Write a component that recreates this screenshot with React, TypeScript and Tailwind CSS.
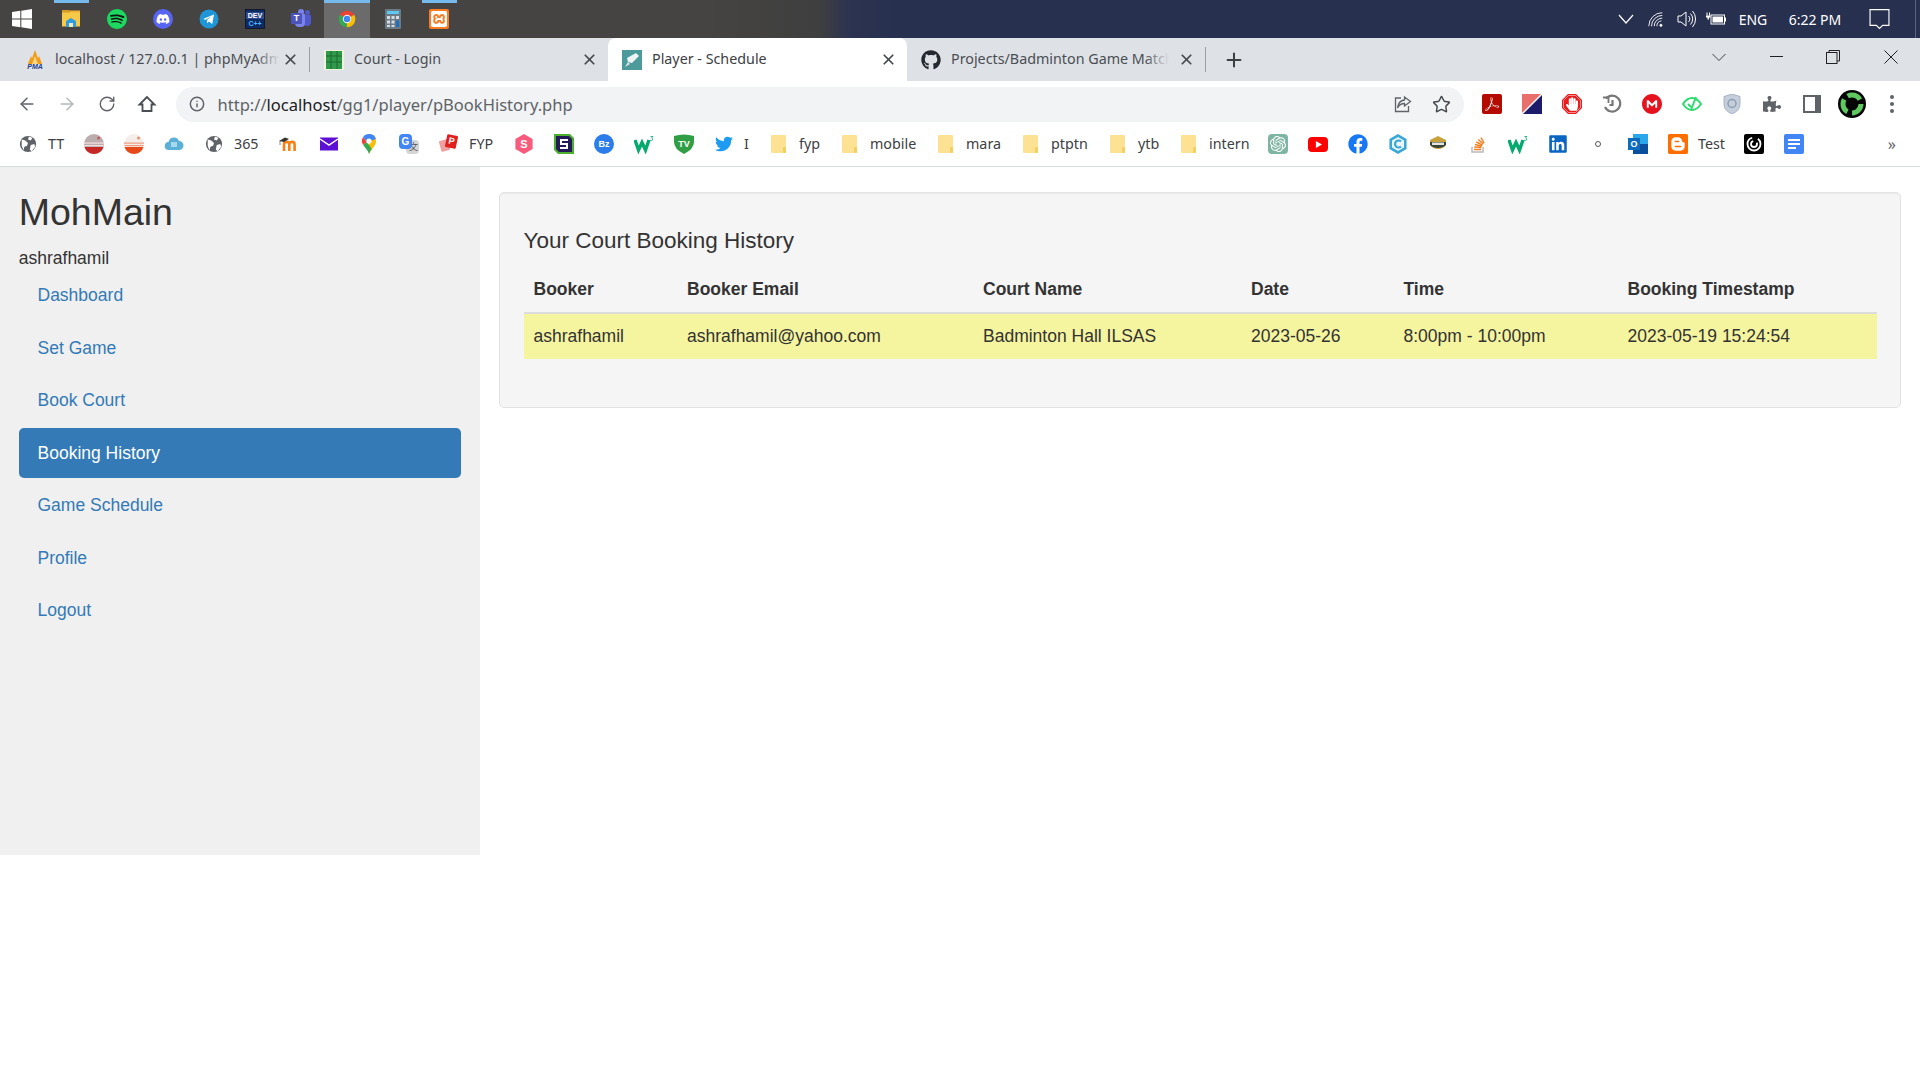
import React from 'react';
import { FaDiscord, FaFacebook, FaGithub, FaHandPaper, FaLinkedin, FaPuzzlePiece, FaTwitter } from 'react-icons/fa';
import { SiAdobeacrobatreader, SiBlogger, SiMega, SiOpenai, SiSpotify, SiXampp } from 'react-icons/si';
import { ArrowLeft, ArrowRight, Info, Plus, RotateCw, Star, X } from 'lucide-react';

const Chrome = () => (
  <svg viewBox="0 0 48 48" className="w-5 h-5">
    <path d="M24 24L41.3 14A20 20 0 0 0 6.7 14Z" fill="#ea4335" />
    <path d="M24 24L6.7 14A20 20 0 0 0 24 44Z" fill="#34a853" />
    <path d="M24 24L24 44A20 20 0 0 0 41.3 14Z" fill="#fbbc04" />
    <circle cx="24" cy="24" r="10" fill="#fff" />
    <circle cx="24" cy="24" r="8" fill="#4285f4" />
  </svg>
);

const Globe = () => (
  <svg viewBox="0 0 20 20" className="w-[18px] h-[18px]">
    <circle cx="10" cy="10" r="9" fill="#5f6368" />
    <path d="M3 5l4 1 3 3-1 3-3 1-1 4-2-5zM11 2l4 1-2 3-3-1zM13 11l4-1 1 3-4 5-2-2z" fill="#fff" />
  </svg>
);

const Folder = () => (
  <svg viewBox="0 0 20 20" className="w-5 h-5">
    <path d="M3 1h13a1 1 0 0 1 1 1v16a1 1 0 0 1-1 1H3a1 1 0 0 1-1-1V2a1 1 0 0 1 1-1z" fill="#fde293" />
    <rect x="14" y="13" width="3" height="6" rx="1" fill="#f6cf5c" />
  </svg>
);

const Oval = ({ top, stripe, dark }: { top: string; stripe: string; dark: string }) => (
  <svg viewBox="0 0 20 20" className="w-5 h-5">
    <circle cx="10" cy="10" r="10" fill={top} />
    <path d="M0.500 13h19a10 10 0 0 1-19 0z" fill={dark} />
    <rect x="0" y="8.500" width="20" height="1.200" fill={stripe} />
    <rect x="0.500" y="11" width="19" height="1.200" fill={stripe} />
    <circle cx="14.500" cy="4" r="1.500" fill={dark} opacity="0.6" />
  </svg>
);

const W3 = () => (
  <svg viewBox="0 0 20 20" className="w-5 h-5" fill="none">
    <path d="M1 6l3.500 10L8 8.500 11.500 16 15 6" stroke="#04aa6d" strokeWidth="3.400" />
    <path d="M16.500 2.500h2.500l-1.500 1.500q2 .5 1 2-1 1-2.500.2" stroke="#04aa6d" strokeWidth="0.800" />
  </svg>
);

const Hex = ({ color, label }: { color: string; label: string }) => (
  <span className="relative w-5 h-5 flex items-center justify-center">
    <svg viewBox="0 0 20 20" className="absolute inset-0 w-5 h-5">
      <path d="M10 0l8.600 5v10L10 20l-8.600-5V5z" fill={color} />
    </svg>
    <span className="relative text-white text-[11px] font-bold font-['Liberation_Sans',sans-serif]">{label}</span>
  </span>
);

type Mark = { icon: React.ReactNode; label?: string; labelWidth?: string };

const bookmarks: Mark[] = [
  { icon: <Globe />, label: 'TT', labelWidth: 'w-[16px]' },
  { icon: <Oval top="#bcaeae" stripe="#f5dede" dark="#c62828" /> },
  { icon: <Oval top="#f4eeea" stripe="#f09a80" dark="#e64a19" /> },
  {
    icon: (
      <svg viewBox="0 0 20 20" className="w-5 h-5">
        <path d="M5 16a4 4 0 0 1-.5-8A5.500 5.500 0 0 1 15 7a4.500 4.500 0 0 1 0 9z" fill="#5bb0d8" />
        <rect x="7" y="8" width="6" height="5" fill="#a8d8ee" />
      </svg>
    ),
  },
  { icon: <Globe />, label: '365', labelWidth: 'w-[25px]' },
  {
    icon: (
      <svg viewBox="0 0 20 20" className="w-5 h-5" fill="none">
        <path d="M5 17v-6.500a2.600 2.600 0 0 1 5.300 0V17M10.300 10.500a2.600 2.600 0 0 1 5.300 0V17" stroke="#f98012" strokeWidth="2.600" />
        <path d="M0 7l6-3.500L10 5 5 8z" fill="#333" />
        <path d="M1 7v4" stroke="#555" strokeWidth="0.700" />
      </svg>
    ),
  },
  {
    icon: (
      <svg viewBox="0 0 20 20" className="w-5 h-5">
        <rect x="1" y="3.500" width="18" height="13" fill="#5e0fd6" />
        <path d="M1 5l9 6 9-6" fill="none" stroke="#fff" strokeWidth="1.500" />
      </svg>
    ),
  },
  {
    icon: (
      <svg viewBox="0 0 20 20" className="w-5 h-5">
        <path d="M10 0a7 7 0 0 1 7 7c0 5-5 8-7 13z" fill="#fbbc04" />
        <path d="M10 0a7 7 0 0 0-6 3.300L8 8l9-3a7 7 0 0 0-7-5z" fill="#4285f4" />
        <path d="M4 3.300A7 7 0 0 0 4.200 11L8 8z" fill="#ea4335" />
        <path d="M4.200 11C6 14 9 16 10 20c.6-2 1.600-3.600 2.700-5L8 8z" fill="#34a853" />
        <circle cx="10" cy="7" r="2.600" fill="#fff" />
      </svg>
    ),
  },
  {
    icon: (
      <span className="relative w-5 h-5">
        <span className="absolute right-0 bottom-0 w-[13px] h-[14px] bg-[#d5d5d5] rounded-sm text-[9px] text-[#555] text-right pr-[1px] font-['Noto_Sans_CJK_SC',sans-serif] leading-[14px]">
          文
        </span>
        <span className="absolute left-0 top-0 w-[13px] h-[15px] bg-[#4285f4] rounded-sm text-[10px] font-bold text-white text-center leading-[15px] font-['Liberation_Sans',sans-serif]">
          G
        </span>
      </span>
    ),
  },
  {
    icon: (
      <span className="relative w-5 h-5">
        <span className="absolute left-[1px] top-[6px] w-[9px] h-[11px] bg-[#f0a0a0] rotate-[-15deg] rounded-[1px]" />
        <span className="absolute left-[7px] top-[1px] w-[11px] h-[13px] bg-[#e0201c] rotate-[12deg] rounded-[1px] text-white text-[9px] font-bold text-center leading-[13px] font-['Liberation_Sans',sans-serif]">
          P
        </span>
      </span>
    ),
    label: 'FYP',
    labelWidth: 'w-[25px]',
  },
  { icon: <Hex color="#f85b7c" label="S" /> },
  {
    icon: (
      <svg viewBox="0 0 20 20" className="w-5 h-5">
        <path d="M0 0h16l4 4v16H4l-4-4z" fill="#4caf2e" />
        <path d="M2 2h13l3 3v13H5l-3-3z" fill="#241a58" />
        <path d="M6 5h8v2H8v2h6v6H6v-2h6v-2H6z" fill="#fff" />
      </svg>
    ),
  },
  {
    icon: (
      <span className="w-5 h-5 rounded-full bg-[#2b7de9] text-white text-[9px] font-bold flex items-center justify-center font-['Liberation_Sans',sans-serif]">
        Bz
      </span>
    ),
  },
  { icon: <W3 /> },
  {
    icon: (
      <span className="relative w-5 h-5 flex items-center justify-center">
        <svg viewBox="0 0 20 20" className="absolute inset-0 w-5 h-5">
          <path d="M0 2q10-3 20 0v6q0 7-10 12Q0 15 0 8z" fill="#2f9e44" />
        </svg>
        <span className="relative text-white text-[9px] font-bold font-['Liberation_Sans',sans-serif]">TV</span>
      </span>
    ),
  },
  { icon: <FaTwitter className="w-[18px] h-[18px] text-[#1d9bf0]" />, label: 'I', labelWidth: 'w-[5px]' },
  { icon: <Folder />, label: 'fyp', labelWidth: 'w-[21px]' },
  { icon: <Folder />, label: 'mobile', labelWidth: 'w-[46px]' },
  { icon: <Folder />, label: 'mara', labelWidth: 'w-[35px]' },
  { icon: <Folder />, label: 'ptptn', labelWidth: 'w-[37px]' },
  { icon: <Folder />, label: 'ytb', labelWidth: 'w-[21px]' },
  { icon: <Folder />, label: 'intern', labelWidth: 'w-[39px]' },
  {
    icon: (
      <span className="w-5 h-5 rounded-[4px] bg-[#7fb5a3] flex items-center justify-center">
        <SiOpenai className="w-[16px] h-[16px] text-white" />
      </span>
    ),
  },
  {
    icon: (
      <span className="w-5 h-[15px] rounded-[4px] bg-[#f00] flex items-center justify-center">
        <svg viewBox="0 0 8 8" className="w-[7px] h-[7px]">
          <path d="M1 0l7 4-7 4z" fill="#fff" />
        </svg>
      </span>
    ),
  },
  { icon: <FaFacebook className="w-5 h-5 text-[#1877f2]" /> },
  {
    icon: (
      <svg viewBox="0 0 20 20" className="w-5 h-5">
        <path d="M10 0l8.600 5v10L10 20l-8.600-5V5z" fill="#38a9d6" />
        <path d="M10 3l6 3.500v7L10 17l-6-3.500v-7z" fill="#eaf6fb" />
        <path d="M13 7.500a3.500 3.500 0 1 0 0 5" fill="none" stroke="#38a9d6" strokeWidth="2.200" />
      </svg>
    ),
  },
  {
    icon: (
      <svg viewBox="0 0 20 20" className="w-5 h-5">
        <path d="M6 4l4-2 4 2 4 2v5q-3 4-8 4t-8-4V6z" fill="#c7a23d" />
        <path d="M2 8h16v3q-3 3-8 3t-8-3z" fill="#39443c" />
        <rect x="4" y="8.500" width="12" height="2.500" fill="#e5e5e0" />
      </svg>
    ),
  },
  {
    icon: (
      <svg viewBox="0 0 20 20" className="w-5 h-5" fill="none">
        <path d="M4 13v5h11v-5" stroke="#bcbbbb" strokeWidth="1.500" />
        <path d="M6 15.500h7M6.300 13l7 .6M7 10.500l6.800 1.800M8.300 8l6.200 3.200M10.300 5.500l5 4.500M13 3.500l3 5.500" stroke="#f48024" strokeWidth="1.500" />
      </svg>
    ),
  },
  { icon: <W3 /> },
  { icon: <FaLinkedin className="w-5 h-5 text-[#0a66c2]" /> },
  {
    icon: (
      <span className="w-5 h-5 flex items-center justify-center">
        <span className="w-[6px] h-[6px] rounded-full border border-[#555] bg-white" />
      </span>
    ),
  },
  {
    icon: (
      <span className="relative w-5 h-5">
        <span className="absolute right-0 top-0 w-[15px] h-5 bg-[#28a8ea]" />
        <span className="absolute right-0 bottom-0 w-[15px] h-[10px] bg-[#0a4f9e]" />
        <span className="absolute left-0 top-[4px] w-[12px] h-[12px] bg-[#0f6cbd] text-white text-[9px] font-bold text-center leading-[12px] font-['Liberation_Sans',sans-serif]">
          O
        </span>
      </span>
    ),
  },
  { icon: <SiBlogger className="w-5 h-5 text-[#ff6d00]" />, label: 'Test', labelWidth: 'w-[26px]' },
  {
    icon: (
      <svg viewBox="0 0 20 20" className="w-5 h-5">
        <rect width="20" height="20" rx="2" fill="#000" />
        <circle cx="10" cy="10" r="6.500" fill="none" stroke="#fff" strokeWidth="1.800" strokeDasharray="28 6" />
        <circle cx="10" cy="10" r="3" fill="none" stroke="#fff" strokeWidth="1.800" strokeDasharray="13 4" />
      </svg>
    ),
  },
  {
    icon: (
      <svg viewBox="0 0 20 20" className="w-5 h-5">
        <rect width="20" height="20" rx="2" fill="#4285f4" />
        <path d="M4 5h12v2H4zM4 9h12v2H4zM4 13h8v2H4z" fill="#fff" />
      </svg>
    ),
  },
];

const taskIcons: { icon: React.ReactNode; bar?: boolean; active?: boolean }[] = [
  {
    bar: true,
    icon: (
      <svg viewBox="0 0 20 20" className="w-5 h-5">
        <path d="M1 1.500h18v3H1z" fill="#f2b134" />
        <path d="M1 1.500h7l2 2h9v14H1z" fill="#f7c948" />
        <path d="M1 1.500h7l1.500 2H1z" fill="#d69a1e" />
        <path d="M5 12l5-3 5 3v6H5z" fill="#2f9be0" />
        <rect x="8" y="14" width="4" height="4" fill="#f7e9b0" />
      </svg>
    ),
  },
  {
    icon: (
      <span className="w-5 h-5 rounded-full bg-[#121212] flex items-center justify-center">
        <SiSpotify className="w-5 h-5 text-[#1ed760]" />
      </span>
    ),
  },
  {
    icon: (
      <span className="w-5 h-5 rounded-full bg-[#5865f2] flex items-center justify-center">
        <FaDiscord className="w-[14px] h-[14px] text-white" />
      </span>
    ),
  },
  {
    icon: (
      <svg viewBox="0 0 20 20" className="w-5 h-5">
        <circle cx="10" cy="10" r="9.500" fill="#1f96d8" />
        <path d="M4 10l11-4.500-1.800 9.500-3.300-2.400-1.700 1.700-.3-3 4.400-4-5.600 3.400z" fill="#fff" />
      </svg>
    ),
  },
  {
    icon: (
      <span className="w-5 h-5 bg-[#0d2a63] border border-[#10182b] flex flex-col items-center justify-center font-['Liberation_Sans',sans-serif] font-bold leading-none">
        <span className="text-[7px] text-white bg-[#2c4a8c] w-full text-center">DEV</span>
        <span className="text-[7px] text-[#4fb3ff] mt-[1px]">C++</span>
      </span>
    ),
  },
  {
    icon: (
      <span className="relative w-5 h-5">
        <span className="absolute right-0 top-[6px] w-[8px] h-[11px] rounded-b-[4px] bg-[#5059c9]" />
        <span className="absolute right-[1px] top-[1px] w-[5px] h-[5px] rounded-full bg-[#5059c9]" />
        <span className="absolute left-[7px] top-0 w-[6px] h-[6px] rounded-full bg-[#7b83eb]" />
        <span className="absolute left-[4px] top-[5px] w-[10px] h-[13px] rounded-b-[4px] bg-[#7b83eb]" />
        <span className="absolute left-0 top-[4px] w-[11px] h-[11px] rounded-[1px] bg-[#4b53bc] text-white text-[9px] font-bold text-center leading-[11px] font-['Liberation_Sans',sans-serif]">
          T
        </span>
      </span>
    ),
  },
  { bar: true, active: true, icon: <Chrome /> },
  {
    icon: (
      <svg viewBox="0 0 20 20" className="w-5 h-5">
        <rect x="2" y="0" width="16" height="20" rx="1" fill="#6c7a86" />
        <rect x="4" y="2" width="12" height="3" fill="#5ec8f2" />
        <path d="M4 7h3v3H4zM8.500 7h3v3h-3zM4 11.500h3v3H4zM8.500 11.500h3v3h-3zM4 16h3v2H4zM8.500 16h3v2h-3z" fill="#d6dde2" />
        <rect x="13" y="7" width="3" height="3" fill="#d6dde2" />
        <rect x="13" y="11.500" width="3" height="6.500" fill="#1f6fbf" />
      </svg>
    ),
  },
  {
    bar: true,
    icon: (
      <span className="w-5 h-5 rounded-[2px] bg-[#fb7a24] flex items-center justify-center">
        <SiXampp className="w-4 h-4 text-white" />
      </span>
    ),
  },
];

const Tab = ({
  icon,
  title,
  active,
  widthClass,
  padClass,
  textClass,
  fadeTo,
}: {
  icon: React.ReactNode;
  title: string;
  active?: boolean;
  widthClass: string;
  padClass: string;
  textClass: string;
  fadeTo?: string;
}) => (
  <div className={`${widthClass} ${padClass} h-[43px] flex items-center pr-[10px] ${active ? 'bg-white rounded-t-lg text-[#3c4043]' : 'text-[#4a4e53]'}`}>
    <span className="w-5 h-5 flex items-center justify-center shrink-0">{icon}</span>
    <span className={`relative ml-[10px] mb-[2px] ${textClass} overflow-hidden whitespace-nowrap leading-[20px]`}>
      {title}
      {fadeTo && <span className={`absolute right-0 top-0 bottom-0 w-[24px] bg-gradient-to-r from-transparent ${fadeTo}`} />}
    </span>
    <X className="ml-auto w-[17px] h-[17px] text-[#45484c] shrink-0" strokeWidth={2.4} />
  </div>
);

const nav = ['Dashboard', 'Set Game', 'Book Court', 'Booking History', 'Game Schedule', 'Profile', 'Logout'];

const TOOLBAR_BTN = 'w-[40px] h-[35px] flex items-center justify-center shrink-0';

export default function App() {
  return (
    <div className="min-h-[1080px] bg-white overflow-hidden font-['Liberation_Sans',Arial,sans-serif] text-[17.5px] leading-[25px] text-[#333]">
      <div id="browser-chrome" className="font-['Noto_Sans',sans-serif]">
        {/* windows taskbar */}
        <div className="h-[38px] flex items-stretch text-white bg-[linear-gradient(90deg,#454442_0,#454442_700px,#3f3f3f_820px,#2b3350_850px,#27304f_900px,#27304f_100%)]">
          <div className="w-[48px] flex items-center justify-center pr-[5px]">
            <svg viewBox="0 0 20 20" className="w-5 h-5">
              <path d="M0 3l8.300-1.200v7.700H0zM9.300 1.700L20 0v9.500H9.300zM0 10.500h8.300v7.700L0 17zM9.300 10.500H20V20L9.300 18.300z" fill="#fff" />
            </svg>
          </div>
          {taskIcons.map((t, i) => (
            <div key={i} className={`relative w-[46px] flex items-center justify-center ${t.active ? 'bg-[#6b6b6b]' : ''}`}>
              {t.bar && <span className={`absolute top-0 h-[3px] bg-[#76b9ed] ${t.active ? 'left-0 right-0' : 'left-[6px] right-[5px]'}`} />}
              {t.icon}
            </div>
          ))}
          <div className="ml-auto flex items-center text-[14px]">
            <svg viewBox="0 0 20 20" className="w-[20px] h-[20px] mr-[11px]" fill="none" stroke="#fff" strokeWidth="1.200">
              <path d="M3 6l7 8 7-8" />
            </svg>
            <svg viewBox="0 0 20 20" className="w-[18px] h-[18px] mr-[11px]" fill="none" stroke="#fff" strokeWidth="1">
              <path d="M2 18A15 15 0 0 1 17 3M5 18A12 12 0 0 1 17 6M8 18a9 9 0 0 1 9-9M11 18a6 6 0 0 1 5-6" />
              <circle cx="15.500" cy="17" r="1.200" fill="#fff" />
            </svg>
            <svg viewBox="0 0 20 20" className="w-[20px] h-[20px] mr-[10px]" fill="none" stroke="#fff" strokeWidth="1">
              <path d="M2 7h3l5-4v14l-5-4H2zM12.500 7a4 4 0 0 1 0 6M14.500 4.500a8 8 0 0 1 0 11M16.500 2a12 12 0 0 1 0 16" />
            </svg>
            <svg viewBox="0 0 20 16" className="w-[20px] h-[16px] mr-[11px]">
              <path d="M1 1.500v3M3.500 1.500v3" stroke="#fff" strokeWidth="1" />
              <path d="M0 4.500h4.500v2H3V8.500H1.500V6.500H0z" fill="#fff" />
              <rect x="5" y="4" width="13.500" height="9" fill="none" stroke="#fff" />
              <rect x="6.500" y="5.500" width="10.500" height="6" fill="#fff" />
              <rect x="18.500" y="6.500" width="1.500" height="4" fill="#fff" />
            </svg>
            <span className="w-[32px] text-center mr-[18px]">ENG</span>
            <span className="w-[56px] text-center mr-[25.5px]">6:22 PM</span>
            <svg viewBox="0 0 20 20" className="w-[21px] h-[22px] mr-[25.5px]" fill="none" stroke="#fff" strokeWidth="1.100">
              <path d="M1 1h18v15h-6l-3 3-3-3H1z" />
            </svg>
            <span className="w-px h-[38px] bg-[#5c647d] mr-[4px]" />
          </div>
        </div>

        {/* tab strip */}
        <div className="relative h-[43px] bg-[#dee1e6] flex items-center text-[14.3px]">
          <Tab
            widthClass="w-[309px]"
            padClass="pl-[25px]"
            textClass="w-[225px]"
            fadeTo="to-[#dee1e6]"
            title="localhost / 127.0.0.1 | phpMyAdmin"
            icon={
              <span className="relative w-5 h-5">
                <svg viewBox="0 0 20 14" className="absolute left-0 top-0 w-5 h-[14px]">
                  <path d="M3 14L6 6l1 2.500L10 0l3 8.500L14 6l3 8z" fill="#f39c12" />
                  <path d="M7 14l3-8 3 8z" fill="#f9d48a" />
                </svg>
                <span className="absolute left-0 right-0 top-[13px] text-center text-[7px] leading-[7px] font-bold italic text-[#1d3f8b] font-['Liberation_Sans',sans-serif]">
                  PMA
                </span>
              </span>
            }
          />
          <span className="w-px h-[25px] bg-[#9aa0a6]" />
          <Tab
            widthClass="w-[298px]"
            padClass="pl-[14px]"
            textClass="w-[200px]"
            title="Court - Login"
            icon={
              <svg viewBox="0 0 20 20" className="w-5 h-5">
                <rect width="20" height="20" fill="#eef3dc" />
                <rect x="2" y="1" width="16" height="18" fill="#2e9a4a" />
                <path d="M2 6h16M2 12h16M7 1v18M13 1v18" stroke="#1b6b30" strokeWidth="1" />
              </svg>
            }
          />
          <Tab
            active
            widthClass="w-[299px]"
            padClass="pl-[14px]"
            textClass="w-[200px]"
            title="Player - Schedule"
            icon={
              <svg viewBox="0 0 20 20" className="w-5 h-5">
                <rect width="20" height="20" fill="#4c9a9a" />
                <path d="M14 3l3 3-7 7-4-1-1-4z" fill="#eef4f4" />
                <path d="M3 17l3-5 2 2z" fill="#dfe8e8" />
              </svg>
            }
          />
          <Tab
            widthClass="w-[298px]"
            padClass="pl-[14px]"
            textClass="w-[218px]"
            fadeTo="to-[#dee1e6]"
            title="Projects/Badminton Game Matchmaking"
            icon={<FaGithub className="w-5 h-5 text-[#24292f]" />}
          />
          <span className="w-px h-[25px] bg-[#9aa0a6]" />
          <Plus className="ml-[17px] w-[22px] h-[22px] text-[#3c4043]" strokeWidth={2.2} />
          {/* window controls */}
          <svg viewBox="0 0 14 14" className="absolute left-[1712px] top-[12px] w-[14px] h-[14px]" fill="none" stroke="#3c4043" strokeWidth="1">
            <path d="M0.500 4l6.500 6.500L13.500 4" />
          </svg>
          <span className="absolute left-[1770px] top-[18px] w-[13px] h-px bg-[#202124]" />
          <svg viewBox="0 0 14 14" className="absolute left-[1826px] top-[12px] w-[14px] h-[14px]" fill="none" stroke="#202124" strokeWidth="1">
            <rect x="0.500" y="2.500" width="10.500" height="11" />
            <path d="M3 2.500V.5h10.500v10.500H11" />
          </svg>
          <svg viewBox="0 0 14 14" className="absolute left-[1884px] top-[12px] w-[14px] h-[14px]" fill="none" stroke="#202124" strokeWidth="1">
            <path d="M0.500 0.500l13 13M13.500 0.500l-13 13" />
          </svg>
        </div>

        {/* address bar */}
        <div className="h-[43px] flex items-center pl-[7px] pr-[8px] pt-[3px] bg-white text-[#5f6368]">
          <div className={TOOLBAR_BTN}>
            <ArrowLeft className="w-[20px] h-[20px]" strokeWidth={1.8} />
          </div>
          <div className={TOOLBAR_BTN}>
            <ArrowRight className="w-[20px] h-[20px] text-[#b5b7ba]" strokeWidth={1.8} />
          </div>
          <div className={TOOLBAR_BTN}>
            <RotateCw className="w-[18px] h-[18px]" strokeWidth={1.8} />
          </div>
          <div className={TOOLBAR_BTN}>
            <svg viewBox="0 0 20 20" className="w-5 h-5" fill="none" stroke="#4a4d51" strokeWidth="1.800">
              <path d="M10 3L2.500 10.500H5.500V17h9v-6.500h3z" />
            </svg>
          </div>
          <div className="ml-[8.5px] flex-1 h-[35px] rounded-full bg-[#f1f3f4] flex items-center pl-[13px] pr-[12px]">
            <Info className="w-[16px] h-[16px] text-[#5f6368]" strokeWidth={2.2} />
            <span className="ml-[13px] text-[16.55px] leading-[35px] text-[#5f6368] whitespace-nowrap">
              http://<span className="text-[#202124]">localhost</span>/gg1/player/pBookHistory.php
            </span>
            <svg viewBox="0 0 20 20" className="ml-auto w-5 h-5 mr-[19px]" fill="none" stroke="#5f6368" strokeWidth="1.300">
              <path d="M8 4H2.500v13.500h13V12" />
              <path d="M11.500 3l6 4.500-6 4.500V9.500C8 9.500 6 11 4.500 14c.5-4.500 3-7.500 7-8z" />
            </svg>
            <Star className="w-[19px] h-[19px] mr-[1px] text-[#45484c]" strokeWidth={1.8} />
          </div>
          <div className="ml-[8px] flex items-center">
            <div className={TOOLBAR_BTN}>
              <span className="w-5 h-5 rounded-[2px] bg-[#b30b00] flex items-center justify-center">
                <SiAdobeacrobatreader className="w-[14px] h-[14px] text-white" />
              </span>
            </div>
            <div className={TOOLBAR_BTN}>
              <svg viewBox="0 0 20 20" className="w-5 h-5">
                <path d="M0 0h19L0 19z" fill="#e86f6a" />
                <path d="M20 1v19H1z" fill="#1c1c6b" />
              </svg>
            </div>
            <div className={TOOLBAR_BTN}>
              <span className="relative w-5 h-5 flex items-center justify-center">
                <svg viewBox="0 0 20 20" className="absolute inset-0 w-5 h-5">
                  <path d="M6 0h8l6 6v8l-6 6H6l-6-6V6z" fill="#e81c1c" />
                  <path d="M6.500 1.500h7l5 5v7l-5 5h-7l-5-5v-7z" fill="none" stroke="#fff" strokeWidth="0.500" />
                </svg>
                <FaHandPaper className="relative w-[12px] h-[14px] text-white" />
              </span>
            </div>
            <div className={TOOLBAR_BTN}>
              <svg viewBox="0 0 20 20" className="w-5 h-5" fill="none" stroke="#777" strokeWidth="2.200">
                <path d="M4 4.500A8 8 0 1 1 3 13" />
                <path d="M1 3.500h5.500V9" strokeWidth="1.800" />
                <path d="M10.500 6v5h-3" />
              </svg>
            </div>
            <div className={TOOLBAR_BTN}>
              <SiMega className="w-5 h-5 text-[#e5131f]" />
            </div>
            <div className={TOOLBAR_BTN}>
              <svg viewBox="0 0 20 20" className="w-5 h-5" fill="none" stroke="#2edb6f" strokeWidth="2">
                <path d="M1 10q4-6 9-6t9 6q-4 6-9 6t-9-6z" />
                <path d="M6 10l3 3M14 3l-5 13" />
              </svg>
            </div>
            <div className={TOOLBAR_BTN}>
              <svg viewBox="0 0 20 20" className="w-5 h-5">
                <path d="M10 0l8 2.500v8q0 6-8 9.500-8-3.500-8-9.500v-8z" fill="#c5cfdc" stroke="#9aa8bb" strokeWidth="0.800" />
                <circle cx="10" cy="9.500" r="4" fill="none" stroke="#8d9cb2" strokeWidth="1.500" />
              </svg>
            </div>
            <div className={TOOLBAR_BTN}>
              <FaPuzzlePiece className="w-[18px] h-[18px] text-[#5f6368]" />
            </div>
            <div className={TOOLBAR_BTN}>
              <svg viewBox="0 0 18 18" className="w-[18px] h-[18px]">
                <rect x="0" y="0" width="18" height="18" fill="#5f6368" />
                <rect x="2" y="2" width="10" height="14" fill="#fff" />
              </svg>
            </div>
            <div className={TOOLBAR_BTN}>
              <svg viewBox="0 0 28 28" className="w-[28px] h-[28px]">
                <circle cx="14" cy="14" r="14" fill="#050505" />
                <circle cx="14" cy="14" r="9" fill="none" stroke="#5fc95f" strokeWidth="5" strokeDasharray="14 4.800" />
                <path d="M14 8l1.800 4.200 4.400.3-3.400 2.900 1.100 4.400-3.900-2.400-3.900 2.400 1.100-4.400-3.400-2.900 4.400-.3z" fill="#050505" />
              </svg>
            </div>
            <div className={TOOLBAR_BTN}>
              <span className="flex flex-col gap-[3px]">
                <span className="w-[4px] h-[4px] rounded-full bg-[#5f6368]" />
                <span className="w-[4px] h-[4px] rounded-full bg-[#5f6368]" />
                <span className="w-[4px] h-[4px] rounded-full bg-[#5f6368]" />
              </span>
            </div>
          </div>
        </div>

        {/* bookmarks bar */}
        <div className="h-[43px] pl-[8px] pr-[24px] pb-[2px] flex items-center bg-white border-b border-[#dadce0] text-[14.3px] text-[#3c4043]">
          {bookmarks.map((b, i) => (
            <div key={i} className="flex items-center px-[10px] shrink-0">
              <span className="w-5 h-5 flex items-center justify-center">{b.icon}</span>
              {b.label && <span className={`ml-[10px] ${b.labelWidth} whitespace-nowrap leading-[20px]`}>{b.label}</span>}
            </div>
          ))}
          <span className="ml-auto text-[#5f6368] text-[16px]">»</span>
        </div>
      </div>

      {/* page */}
      <div className="flex items-start">
        <div className="w-[480px] h-[687.5px] bg-[#f0f0f0] px-[18.75px]">
          <h2 className="mt-[25px] mb-[12.5px] text-[37.5px] leading-[41.25px] font-normal text-[#333]">MohMain</h2>
          <div>ashrafhamil</div>
          <ul className="flex flex-col gap-[2.5px]">
            {nav.map((item) => (
              <li
                key={item}
                className={`h-[50px] px-[18.75px] py-[12.5px] rounded-[5px] ${item === 'Booking History' ? 'bg-[#337ab7] text-white' : 'text-[#337ab7]'}`}
              >
                {item}
              </li>
            ))}
          </ul>
        </div>
        <div className="w-[1440px] px-[18.75px]">
          <div className="mt-[25px] p-[23.75px] bg-[#f5f5f5] border-[1.25px] border-[#e3e3e3] rounded-[5px] shadow-[inset_0_1px_1px_rgba(0,0,0,0.05)]">
            <h4 className="mt-[12.5px] mb-[12.5px] text-[22.5px] leading-[24.75px] font-normal">Your Court Booking History</h4>
            <table className="w-[1353px] table-fixed mb-[25px]">
              <thead>
                <tr className="border-b-2 border-[#ddd] text-left">
                  <th className="w-[153.5px] p-[10px] font-bold">Booker</th>
                  <th className="w-[296px] p-[10px] font-bold">Booker Email</th>
                  <th className="w-[268px] p-[10px] font-bold">Court Name</th>
                  <th className="w-[152.5px] p-[10px] font-bold">Date</th>
                  <th className="w-[224px] p-[10px] font-bold">Time</th>
                  <th className="w-[259px] p-[10px] font-bold">Booking Timestamp</th>
                </tr>
              </thead>
              <tbody>
                <tr className="bg-[#f5f49f]">
                  <td className="p-[10px]">ashrafhamil</td>
                  <td className="p-[10px]">ashrafhamil@yahoo.com</td>
                  <td className="p-[10px]">Badminton Hall ILSAS</td>
                  <td className="p-[10px]">2023-05-26</td>
                  <td className="p-[10px]">8:00pm - 10:00pm</td>
                  <td className="p-[10px]">2023-05-19 15:24:54</td>
                </tr>
              </tbody>
            </table>
          </div>
        </div>
      </div>
    </div>
  );
}
